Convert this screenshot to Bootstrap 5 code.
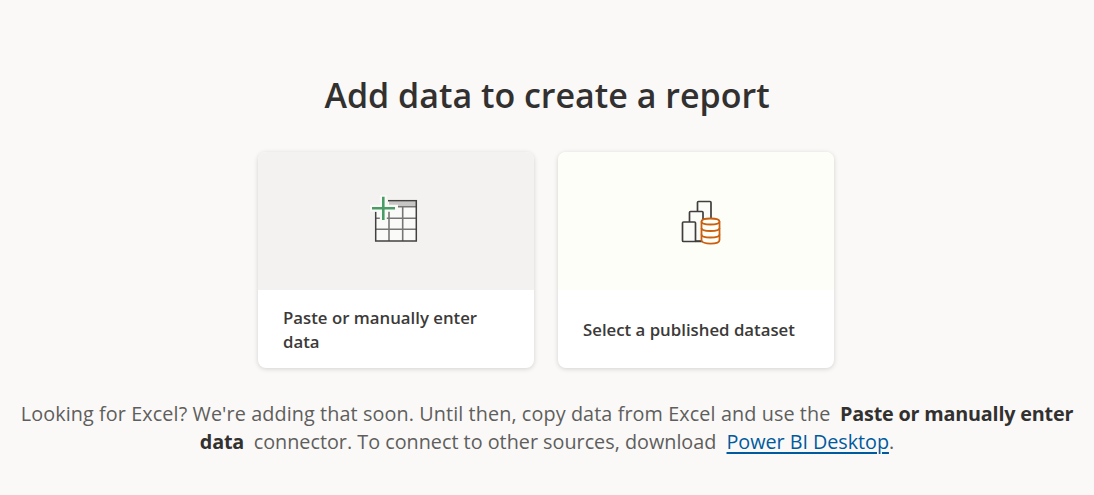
<!DOCTYPE html>
<html lang="en">
<head>
<meta charset="utf-8">
<title>Add data to create a report</title>
<link href="https://cdn.jsdelivr.net/npm/bootstrap@5.3.0/dist/css/bootstrap.min.css" rel="stylesheet">
<style>
html, body { height: 100%; }
body { background: #faf9f8; font-family: "Open Sans", "Noto Sans", sans-serif; color: #252423; overflow: hidden; }
.page-wrap { padding-top: 71px; }
.page-title { font-size: 34px; font-weight: 600; line-height: 48px; color: #323130; margin: 0 0 33px; }
.cards-row { gap: 24px; padding-right: 2px; }
.tile { width: 276px; height: 216px; background: #fff; border-radius: 8px; overflow: hidden; box-shadow: 0 1px 5px rgba(0,0,0,.16); }
.tile-top { height: 138px; }
.tile-grey { background: #f3f2f1; }
.tile-cream { background: #fefef8; }
.tile-text { height: 78px; padding: 1px 24px 0 25px; font-size: 16.8px; font-weight: 600; line-height: 24px; color: #3b3a39; }
.foot-note { margin: 32px auto 0; width: 1060px; font-size: 19.8px; line-height: 28px; color: #605e5c; text-align: center; }
.lead-in { letter-spacing: .1px; }
.foot-note strong { color: #323130; font-weight: 700; margin: 0 4.5px; letter-spacing: -.2px; }
.foot-note a { color: #005a9e; margin: 0 0 0 5px; letter-spacing: -.05px; text-decoration-thickness: 2px; text-underline-offset: 3px; }
</style>
</head>
<body>
<div class="page-wrap">
  <h1 class="page-title text-center">Add data to create a report</h1>
  <div class="d-flex justify-content-center cards-row">
    <div class="tile">
      <div class="tile-top tile-grey d-flex align-items-center justify-content-center">
        <svg width="52" height="52" viewBox="0 0 52 52" fill="none">
          <rect x="5.7" y="5.7" width="40.6" height="40.3" fill="#fafaf9"/>
          <rect x="19" y="6.5" width="27" height="5" fill="#c8c6c4"/>
          <path d="M5.7 23.3H46.3M5.7 34.3H46.3M5.7 11.7H46.3M19 11.7V46M32.7 11.7V46" stroke="#777675" stroke-width="1.6"/>
          <rect x="5.7" y="5.7" width="40.6" height="40.3" stroke="#424140" stroke-width="1.5"/>
          <rect x="0" y="0" width="18" height="16.5" fill="#f3f2f1"/>
          <path d="M0 13.3H28M13.3 0V28" stroke="#f9f9f8" stroke-width="7"/>
          <path d="M2 13.3H25M13.3 1.7V25" stroke="#4a9c67" stroke-width="2.6"/>
        </svg>
      </div>
      <div class="tile-text d-flex align-items-center">Paste or manually enter data</div>
    </div>
    <div class="tile">
      <div class="tile-top tile-cream d-flex align-items-center justify-content-center">
        <svg width="52" height="52" viewBox="0 0 52 52" fill="none">
          <path d="M27.5 16V7.5a1 1 0 0 1 1-1H40a1 1 0 0 1 1 1V24H27.5Z" fill="#fbfbf8" stroke="#3f3e3d" stroke-width="1.7"/>
          <path d="M19.5 27V17.5a1 1 0 0 1 1-1H32a1 1 0 0 1 1 1V46H19.5Z" fill="#fbfbf8" stroke="#3f3e3d" stroke-width="1.7"/>
          <rect x="12.5" y="27" width="13" height="19.5" rx="1" fill="#fbfbf8" stroke="#3f3e3d" stroke-width="1.7"/>
          <path d="M25 46.5H33" stroke="#3f3e3d" stroke-width="1.7"/>
          <path d="M31.5 26.5C31.5 22.5 49.5 22.5 49.5 26.5V45C49.5 49.8 31.5 49.8 31.5 45Z" fill="#fefef8" stroke="#ca5f10" stroke-width="1.8"/>
          <path d="M31.5 26.5C31.5 30.5 49.5 30.5 49.5 26.5M31.5 33C31.5 37 49.5 37 49.5 33M31.5 39.5C31.5 43.5 49.5 43.5 49.5 39.5" stroke="#ca5f10" stroke-width="1.8"/>
        </svg>
      </div>
      <div class="tile-text d-flex align-items-center">Select a published dataset</div>
    </div>
  </div>
  <p class="foot-note"><span class="lead-in">Looking for Excel? We're adding that soon. Until then, copy data from Excel and use the</span> <strong>Paste or manually enter data</strong> connector. To connect to other sources, download <a href="#">Power BI Desktop</a>.</p>
</div>
</body>
</html>
